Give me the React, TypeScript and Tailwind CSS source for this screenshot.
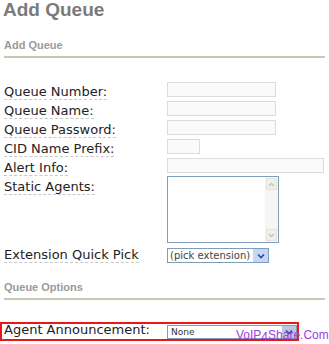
import React from "react";

const labelFont = { fontFamily: '"DejaVu Sans", Verdana, sans-serif' };

const Label = ({ children }: { children: React.ReactNode }) => (
  <span className="border-b border-dashed border-[#c8c8c8] leading-[14px]">{children}</span>
);

const TextInput = ({ w }: { w: string }) => (
  <div className={`${w} h-[15px] mt-[1px] border border-[#dcdcdc] bg-[#fafafa]`} />
);

const Chevron = () => (
  <svg width="8" height="6" viewBox="0 0 8 6">
    <path d="M1 1.5 L4 4.5 L7 1.5" fill="none" stroke="#2b4a8a" strokeWidth="1.6" />
  </svg>
);

const SectionHead = ({ title }: { title: string }) => (
  <div className="px-[4px]">
    <div className="text-[11px] font-bold text-[#9a9a9a] leading-[13px]" style={{ fontFamily: '"Liberation Sans", Arial, sans-serif' }}>
      {title}
    </div>
    <div className="mt-[4px] h-[2px] bg-[#cbc6b2]" />
  </div>
);

export default function App() {
  const rows = [
    { label: "Queue Number:", w: "w-[109px]" },
    { label: "Queue Name:", w: "w-[109px]" },
    { label: "Queue Password:", w: "w-[109px]" },
    { label: "CID Name Prefix:", w: "w-[33px]" },
    { label: "Alert Info:", w: "w-[157px]" },
  ];

  return (
    <div className="relative w-[329px] h-[344px] overflow-hidden bg-white text-[#222]">
      <h1
        className="pl-[3px] text-[19px] font-bold text-[#7a7a7a] leading-[20px]"
        style={{ fontFamily: '"Liberation Sans", Arial, sans-serif' }}
      >
        Add Queue
      </h1>

      <div className="mt-[19px]">
        <SectionHead title="Add Queue" />
      </div>

      <div className="mt-[23px] text-[13px]" style={labelFont}>
        {rows.map((r) => (
          <div key={r.label} className="flex h-[19px]">
            <div className="w-[167px] pl-[4px] pt-[1px] leading-[19px]">
              <Label>{r.label}</Label>
            </div>
            <TextInput w={r.w} />
          </div>
        ))}

        <div className="flex h-[72px]">
          <div className="w-[167px] pl-[4px] pt-[1px] leading-[19px]">
            <Label>Static Agents:</Label>
          </div>
          <div className="flex w-[112px] h-[67px] border border-[#7f9db9] bg-white">
            <div className="flex-1" />
            <div className="flex w-[13px] flex-col justify-between bg-[#f6f6f2] p-[1px]">
              <div className="flex h-[12px] items-center justify-center border border-[#e4e4dc] bg-[#f0f0ea]">
                <svg width="7" height="5" viewBox="0 0 7 5">
                  <path d="M1 4 L3.5 1.5 L6 4" fill="none" stroke="#c4c4bc" strokeWidth="1.3" />
                </svg>
              </div>
              <div className="flex h-[12px] items-center justify-center border border-[#e4e4dc] bg-[#f0f0ea]">
                <svg width="7" height="5" viewBox="0 0 7 5">
                  <path d="M1 1 L3.5 3.5 L6 1" fill="none" stroke="#c4c4bc" strokeWidth="1.3" />
                </svg>
              </div>
            </div>
          </div>
        </div>

        <div className="flex h-[19px]">
          <div className="w-[167px] pl-[4px] leading-[13px]">
            <Label>Extension Quick Pick</Label>
          </div>
          <div className="flex w-[102px] h-[15px] items-center border border-[#7f9db9] bg-white">
            <span className="flex-1 pl-[2px] text-[10px] leading-[13px] text-[#444]">(pick extension)</span>
            <div className="flex h-[13px] w-[15px] items-center justify-center bg-[#c6d6f7]">
              <Chevron />
            </div>
          </div>
        </div>
      </div>

      <div className="mt-[14px]">
        <SectionHead title="Queue Options" />
      </div>

      <div className="mt-[22px] flex h-[19px] w-[299px] items-start border-2 border-[#e81818] text-[13px]" style={labelFont}>
        <div className="w-[165px] pl-[2px] leading-[11px]">Agent Announcement:</div>
        <div className="mt-[1px] flex w-[130px] h-[14px] items-center border border-[#7f9db9] bg-white">
          <span className="flex-1 pl-[3px] text-[9px] leading-[12px] text-[#333]">None</span>
          <div className="flex h-[12px] w-[14px] items-center justify-center bg-[#b9c7df]">
            <Chevron />
          </div>
        </div>
      </div>

      <div
        className="absolute left-[236px] top-[328px] text-[12px] leading-[15px] text-[#a13be0]"
        style={{ fontFamily: '"Liberation Sans", Arial, sans-serif' }}
      >
        VoIP<span className="relative top-[2px]">4</span>Share.Com
      </div>
    </div>
  );
}
